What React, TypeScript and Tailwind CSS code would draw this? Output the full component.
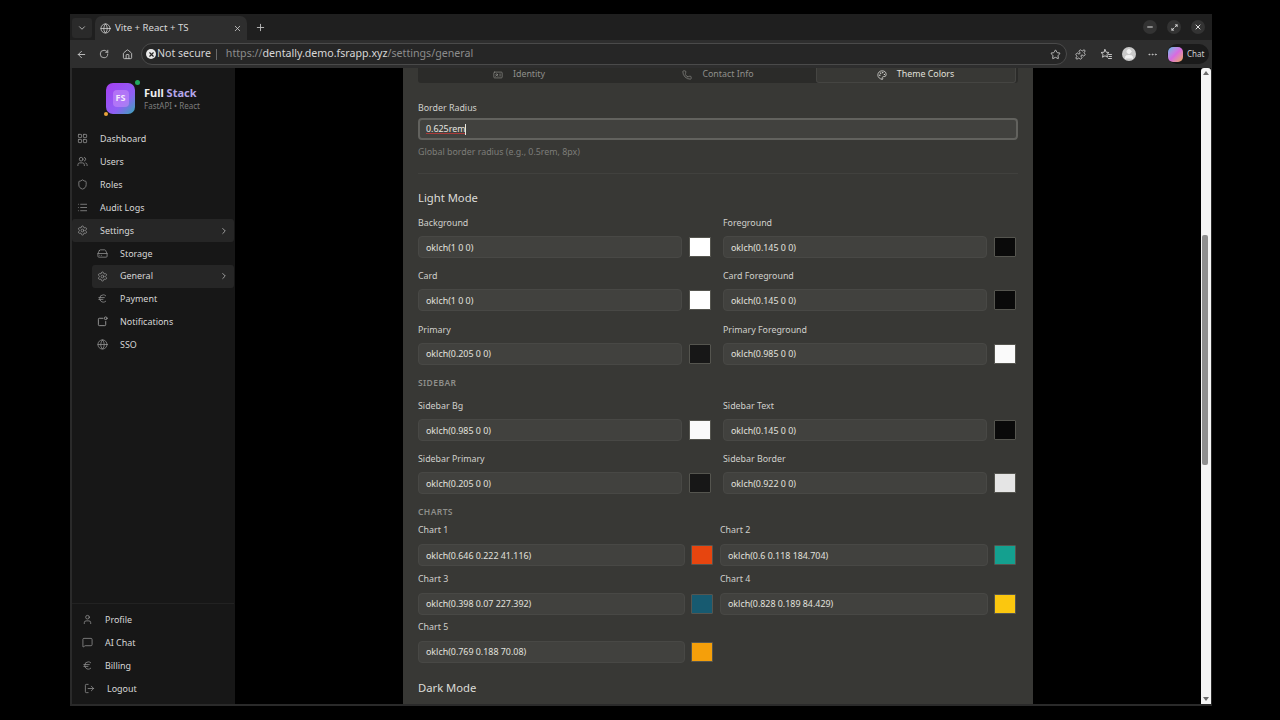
import React from 'react';
import {
  ArrowLeft,
  ChevronDown,
  ChevronRight,
  Euro,
  Globe,
  HardDrive,
  Home,
  IdCard,
  LayoutGrid,
  List,
  LogOut,
  Maximize2,
  MessageSquare,
  Minus,
  MoreHorizontal,
  Palette,
  Phone,
  Plus,
  Puzzle,
  RotateCw,
  Settings,
  Shield,
  Star,
  User,
  Users,
  X,
} from 'lucide-react';

type Field = { label: string; value: string; color: string };

const lightTop: Field[] = [
  { label: 'Background', value: 'oklch(1 0 0)', color: '#ffffff' },
  { label: 'Foreground', value: 'oklch(0.145 0 0)', color: '#0a0a0a' },
  { label: 'Card', value: 'oklch(1 0 0)', color: '#ffffff' },
  { label: 'Card Foreground', value: 'oklch(0.145 0 0)', color: '#0a0a0a' },
  { label: 'Primary', value: 'oklch(0.205 0 0)', color: '#171717' },
  { label: 'Primary Foreground', value: 'oklch(0.985 0 0)', color: '#fafafa' },
];

const sidebarFields: Field[] = [
  { label: 'Sidebar Bg', value: 'oklch(0.985 0 0)', color: '#fafafa' },
  { label: 'Sidebar Text', value: 'oklch(0.145 0 0)', color: '#0a0a0a' },
  { label: 'Sidebar Primary', value: 'oklch(0.205 0 0)', color: '#171717' },
  { label: 'Sidebar Border', value: 'oklch(0.922 0 0)', color: '#e5e5e5' },
];

const chartFields: Field[] = [
  { label: 'Chart 1', value: 'oklch(0.646 0.222 41.116)', color: '#e7450f' },
  { label: 'Chart 2', value: 'oklch(0.6 0.118 184.704)', color: '#14a08f' },
  { label: 'Chart 3', value: 'oklch(0.398 0.07 227.392)', color: '#175a70' },
  { label: 'Chart 4', value: 'oklch(0.828 0.189 84.429)', color: '#fbc70f' },
  { label: 'Chart 5', value: 'oklch(0.769 0.188 70.08)', color: '#f59f0a' },
];

function NotifyIcon({ size = 11, className }: { size?: number; className?: string }) {
  return (
    <svg width={size} height={size} viewBox="0 0 24 24" fill="none" stroke="currentColor" strokeWidth={2} strokeLinecap="round" className={className}>
      <path d="M13 5H5a2 2 0 0 0-2 2v12a2 2 0 0 0 2 2h12a2 2 0 0 0 2-2v-7" />
      <circle cx="19" cy="5" r="3" />
    </svg>
  );
}

function FavoritesIcon({ size = 12, className }: { size?: number; className?: string }) {
  return (
    <svg width={size} height={size} viewBox="0 0 24 24" fill="none" stroke="currentColor" strokeWidth={2} strokeLinejoin="round" strokeLinecap="round" className={className}>
      <path d="M10 3l2.4 5.4 5.6.6-4.2 3.8 1.2 5.7-5-3-5 3 1.2-5.7L2 9l5.6-.6z" />
      <path d="M17 13h6M18 17h5M17 21h6" />
    </svg>
  );
}

const mainNav = [
  { label: 'Dashboard', icon: LayoutGrid },
  { label: 'Users', icon: Users },
  { label: 'Roles', icon: Shield },
  { label: 'Audit Logs', icon: List },
];

const subNav = [
  { label: 'Storage', icon: HardDrive },
  { label: 'General', icon: Settings, active: true },
  { label: 'Payment', icon: Euro },
  { label: 'Notifications', icon: NotifyIcon },
  { label: 'SSO', icon: Globe },
];

const bottomNav = [
  { label: 'Profile', icon: User },
  { label: 'AI Chat', icon: MessageSquare },
  { label: 'Billing', icon: Euro },
];

function ColorField({ field, compact }: { field: Field; compact?: boolean }) {
  return (
    <div className={compact ? 'h-[48.2px]' : 'h-[53.3px]'}>
      <div className="h-[14px] text-[8.85px] leading-[14px] text-[#d0d0cc]">{field.label}</div>
      <div className={`flex items-center ${compact ? 'mt-[7px] gap-[6px]' : 'mt-[6px] gap-[7px]'}`}>
        <div className={`flex h-[22px] flex-1 items-center rounded-[4px] border border-[#484845] bg-[#41413e] px-[7px] text-[8.9px] text-[#e2e2de] ${compact ? '' : 'pt-[1px]'}`}>
          {field.value}
        </div>
        <div
          className="h-[20px] w-[22px] shrink-0 rounded-[1px] border border-[#55554f]"
          style={{ backgroundColor: field.color }}
        />
      </div>
    </div>
  );
}

function SidebarRow({ label, icon: Icon, active, sub }: { label: string; icon: React.ElementType; active?: boolean; sub?: boolean }) {
  return (
    <div
      className={`flex items-center rounded-[3px] text-[8.95px] text-[#d6d6d6] ${
        sub ? 'ml-[20px] h-[22.8px] pl-[4.5px]' : 'h-[23px] pl-[4.5px]'
      } ${active ? 'bg-[#262626]' : ''}`}
    >
      <Icon size={11} strokeWidth={1.6} className="shrink-0 text-[#9a9a9a]" />
      <span className="ml-[12.5px]">{label}</span>
      {active && <ChevronRight size={10} className="ml-auto mr-[5px] text-[#b5b5b5]" />}
    </div>
  );
}

function Sidebar() {
  return (
    <aside className="flex w-[163px] shrink-0 flex-col bg-[#171717] pr-[1px] pb-[4px]">
      <div className="flex h-[59px] items-center pl-[34px] pt-[1px]">
        <div className="relative h-[31px] w-[29px]">
          <div className="flex h-full w-full items-center justify-center rounded-[7px] bg-[linear-gradient(135deg,#a53ff0_0%,#8f5ff5_62%,#35a9b5_100%)]">
            <div className="flex h-[17px] w-[16px] items-center justify-center rounded-[4px] bg-[#c488f8]/60 text-[9px] font-bold text-[#f2e8fd]">
              FS
            </div>
          </div>
          <span className="absolute -right-[4.5px] -top-[2.5px] h-[5px] w-[5px] rounded-full bg-[#22a860]" />
          <span className="absolute -left-[2px] -bottom-[2px] h-[4px] w-[4px] rounded-full bg-[#e8a33a]" />
        </div>
        <div className="ml-[9px] mt-[2px]">
          <div className="text-[11px] font-bold leading-[14px] text-[#eeeeee]">
            Full <span className="text-[#b3a5e8]">Stack</span>
          </div>
          <div className="text-[8px] leading-[12px] text-[#7d7d7d]">FastAPI • React</div>
        </div>
      </div>
      {mainNav.map((item) => (
        <SidebarRow key={item.label} {...item} />
      ))}
      <SidebarRow label="Settings" icon={Settings} active />
      {subNav.map((item) => (
        <SidebarRow key={item.label} sub {...item} />
      ))}
      <div className="mt-auto border-t border-[#222222] pt-[4px]">
        {bottomNav.map((item) => (
          <div key={item.label} className="flex h-[23px] items-center pl-[9.5px] text-[8.95px] text-[#d6d6d6]">
            <item.icon size={11} strokeWidth={1.6} className="text-[#9a9a9a]" />
            <span className="ml-[12.5px]">{item.label}</span>
          </div>
        ))}
        <div className="flex h-[23px] items-center pl-[11.5px] text-[8.95px] text-[#d6d6d6]">
          <LogOut size={11} strokeWidth={1.6} className="text-[#9a9a9a]" />
          <span className="ml-[12.5px]">Logout</span>
        </div>
      </div>
    </aside>
  );
}

function SettingsCard() {
  return (
    <section className="ml-[168px] h-full w-[630px] overflow-hidden bg-[#383835] px-[15px]">
      <div className="flex h-[15px] rounded-b-[3px] bg-[#2b2b29] text-[8.85px] text-[#8f8f8b]">
        <div className="flex w-[199px] items-center justify-center gap-[10px] pb-[2px] pl-[3px]">
          <IdCard size={10} strokeWidth={1.6} />
          Identity
        </div>
        <div className="flex w-[199px] items-center justify-center gap-[10px] pb-[2px] pl-[3px]">
          <Phone size={10} strokeWidth={1.6} />
          Contact Info
        </div>
        <div className="flex w-[200px] items-center justify-center gap-[10px] rounded-b-[3px] border-x border-b border-[#454542] bg-[#383835] pb-[1px] pr-[1px] text-[#e0e0dc]">
          <Palette size={10} strokeWidth={1.8} />
          Theme Colors
        </div>
      </div>

      <div className="mt-[18px] h-[14px] text-[8.85px] leading-[14px] text-[#d0d0cc]">Border Radius</div>
      <div className="mt-[3px] flex h-[22px] items-center rounded-[4px] border-2 border-[#62625e] bg-[#41413e] px-[6px] text-[8.9px] text-[#e6e6e2]">
        <span className="underline decoration-[#a83a3a] decoration-[0.5px]">0.625rem</span>
        <span className="h-[11px] w-px bg-[#e6e6e2]" />
      </div>
      <div className="mt-[5px] text-[8.85px] leading-[14px] text-[#7d7d79]">Global border radius (e.g., 0.5rem, 8px)</div>
      <div className="mt-[14px] border-t border-[#41413e]" />

      <h2 className="mt-[15px] h-[18px] text-[11.25px] leading-[18px] text-[#dcdcd8]">Light Mode</h2>
      <div className="mt-[9px] grid grid-cols-[293px_293px] gap-x-[12px]">
        {lightTop.map((f) => (
          <ColorField key={f.label} field={f} />
        ))}
      </div>

      <h3 className="h-[14px] text-[8.5px] font-semibold leading-[14px] tracking-[0.4px] text-[#8f8f8b]">SIDEBAR</h3>
      <div className="mt-[9px] grid grid-cols-[293px_293px] gap-x-[12px]">
        {sidebarFields.map((f) => (
          <ColorField key={f.label} field={f} />
        ))}
      </div>

      <h3 className="h-[14px] text-[8.5px] font-semibold leading-[14px] tracking-[0.4px] text-[#8f8f8b]">CHARTS</h3>
      <div className="mt-[4px] grid grid-cols-[295px_296px] gap-x-[7px]">
        {chartFields.map((f) => (
          <ColorField key={f.label} field={f} compact />
        ))}
      </div>

      <h2 className="mt-[11px] h-[18px] text-[11.25px] leading-[18px] text-[#dcdcd8]">Dark Mode</h2>
    </section>
  );
}

function Scrollbar() {
  return (
    <div className="flex w-[10px] shrink-0 flex-col rounded-t-[3px] bg-[#f4f4f4] pl-[1px]">
      <div className="ml-[1px] mt-[3px] h-0 w-0 border-x-[3px] border-b-[4px] border-x-transparent border-b-[#6b6b6b]" />
      <div className="mt-[160px] h-[230px] w-[6px] rounded-[2px] bg-[#8f8f8f]" />
      <div className="ml-[1px] mt-auto mb-[3px] h-0 w-0 border-x-[3px] border-t-[4px] border-x-transparent border-t-[#6b6b6b]" />
    </div>
  );
}

export default function App() {
  return (
    <div className="flex h-screen w-full flex-col overflow-hidden bg-[#000000] pt-[14px] pb-[14px] pl-[70px] pr-[68px] font-['Noto_Sans',sans-serif]">
      <div className="flex h-[26px] shrink-0 items-end bg-[#1f1f1f] pl-[2px]">
        <div className="mb-[2px] flex h-[20px] w-[20px] items-center justify-center rounded-[3px] bg-[#2a2a2a] text-[#c8c8c8]">
          <ChevronDown size={10} />
        </div>
        <div className="ml-[3px] flex h-[24px] w-[152px] items-center rounded-t-[7px] bg-[#2e2e2e] pl-[5px] pr-[5.5px] text-[9.6px] text-[#d8d8d8]">
          <Globe size={11} strokeWidth={1.6} />
          <span className="ml-[4px]">Vite + React + TS</span>
          <X size={9} className="ml-auto" />
        </div>
        <Plus size={11} className="mb-[7px] ml-[7.5px] text-[#bdbdbd]" />
        <div className="ml-auto flex items-center gap-[10px] pb-[6px] pr-[7px] text-[#e0e0e0]">
          <span className="flex h-[14px] w-[14px] items-center justify-center rounded-full bg-[#333333]"><Minus size={8} strokeWidth={3} /></span>
          <span className="flex h-[14px] w-[14px] items-center justify-center rounded-full bg-[#333333]"><Maximize2 size={7} strokeWidth={3} /></span>
          <span className="flex h-[14px] w-[14px] items-center justify-center rounded-full bg-[#333333]"><X size={8} strokeWidth={3} /></span>
        </div>
      </div>

      <div className="flex h-[28px] shrink-0 items-center bg-[#2e2e2e] pl-[6px] text-[#c4c4c4]">
        <ArrowLeft size={11} />
        <RotateCw size={10} className="ml-[12px]" />
        <Home size={11} className="ml-[13px]" />
        <div className="ml-[8px] flex h-[22px] w-[926px] items-center rounded-full border border-[#4a4a4a] bg-[#262626] pl-[4px] pr-[5px]">
          <span className="flex h-[10px] w-[10px] items-center justify-center rounded-full bg-[#e8e8e8] text-[#262626]">
            <X size={7} strokeWidth={4} />
          </span>
          <span className="ml-[1px] text-[10.6px] text-[#d4d4d4]">Not secure</span>
          <span className="ml-[5px] h-[11px] w-px bg-[#6a6a6a]" />
          <span className="ml-[9px] text-[10.65px] text-[#8c8c8c]">
            https://<span className="text-[#d8d8d8]">dentally.demo.fsrapp.xyz</span>/settings/general
          </span>
          <Star size={11} className="ml-auto" />
        </div>
        <Puzzle size={11} className="ml-[8px]" />
        <FavoritesIcon size={12} className="ml-[14px]" />
        <span className="ml-[10px] flex h-[14px] w-[14px] items-center justify-center overflow-hidden rounded-full bg-[#c9c9c9] text-[#f0f0f0]">
          <User size={12} fill="currentColor" />
        </span>
        <MoreHorizontal size={11} className="ml-[11px]" />
        <div className="ml-[9px] flex h-[20px] w-[42px] items-center gap-[4px] rounded-full bg-[#1a1a1a] pl-[1px] text-[8px] text-[#cfcfcf]">
          <span className="h-[15px] w-[15px] rounded-[5px] bg-gradient-to-br from-[#3fb8e8] via-[#d86ae0] to-[#f0a83a]" />
          Chat
        </div>
      </div>

      <div className="flex min-h-0 flex-1 border-b-2 border-l-2 border-r border-[#2a2a2a]">
        <Sidebar />
        <main className="min-w-0 flex-1 bg-black">
          <SettingsCard />
        </main>
        <Scrollbar />
      </div>
    </div>
  );
}
